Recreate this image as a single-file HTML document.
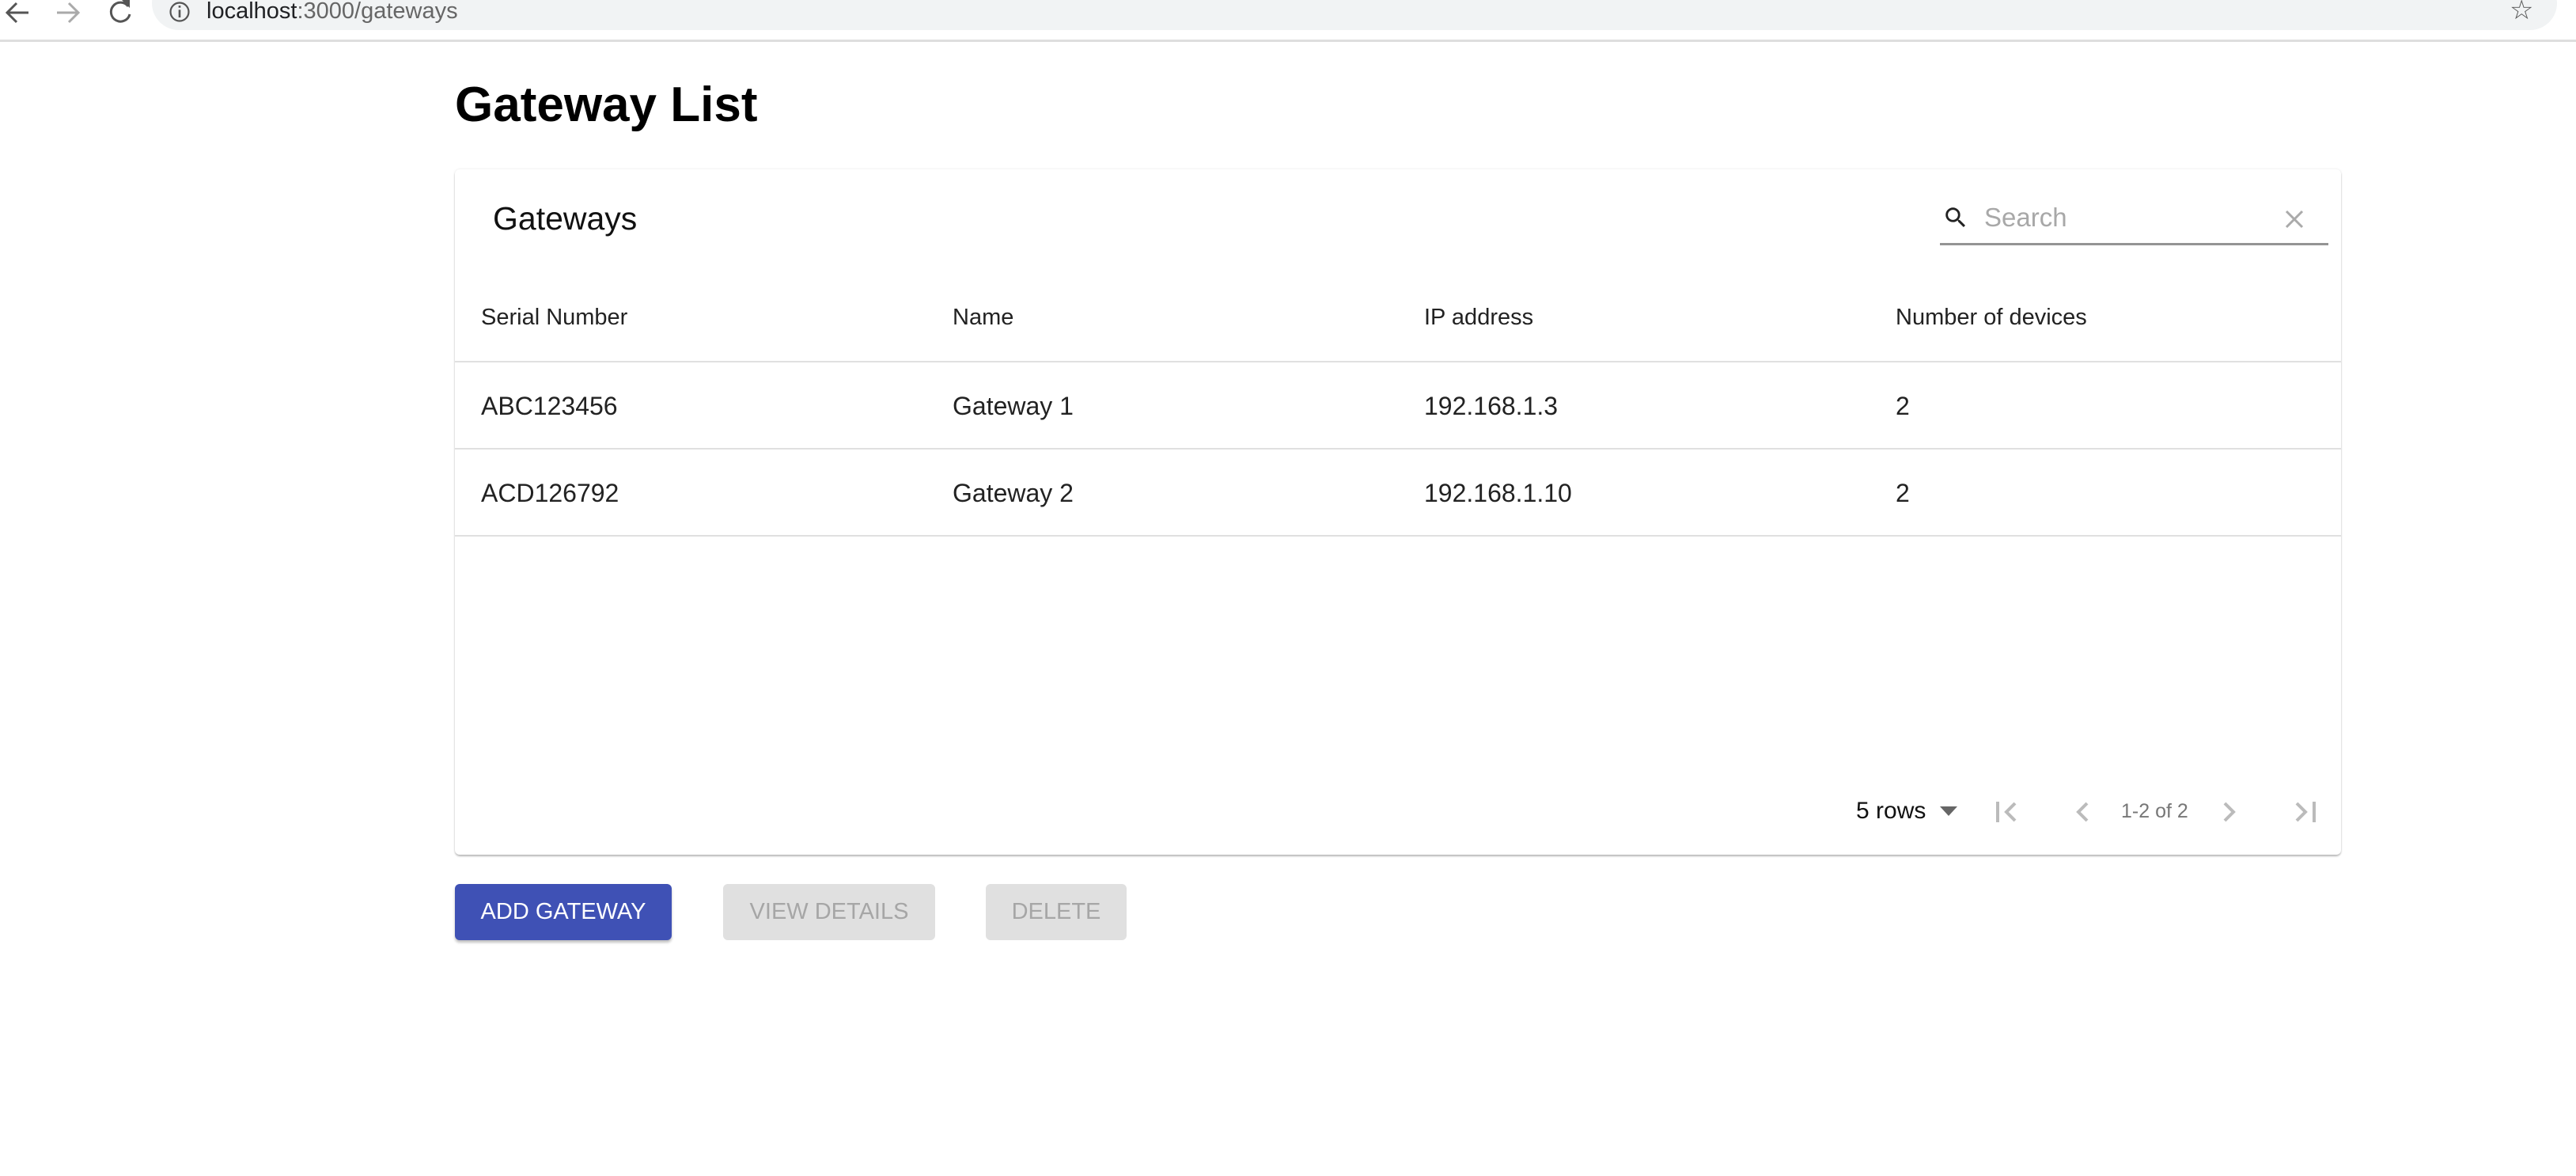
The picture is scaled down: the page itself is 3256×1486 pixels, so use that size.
<!DOCTYPE html>
<html><head><meta charset="utf-8"><style>
*{box-sizing:border-box;margin:0;padding:0}
body{width:3256px;height:1486px;background:#fff;font-family:"Liberation Sans",Arial,sans-serif;position:relative;overflow:hidden;color:#222}
.a{position:absolute}
.txt{position:absolute;white-space:nowrap;line-height:1}
</style></head><body>
<!-- browser bar -->
<div class="a" style="left:192px;top:-30px;width:3040px;height:68px;background:#f1f3f4;border-radius:34px"></div>
<div class="a" style="left:0;top:50px;width:3256px;height:3px;background:#dedede"></div>
<svg class="a" style="left:2px;top:-4px" width="170" height="44" viewBox="0 0 170 44">
<path d="M34 20H8M19 8 7 20l12 12" stroke="#555" stroke-width="3" fill="none"/>
<path d="M70 20h26M85 8l12 12-12 12" stroke="#aaa" stroke-width="3" fill="none"/>
<path d="M160 12a12 12 0 1 0 2 10" stroke="#555" stroke-width="3" fill="none"/><path d="M152 4h10v10z" fill="#555"/>
</svg>
<svg class="a" style="left:212px;top:0px" width="30" height="30" viewBox="0 0 34 34"><circle cx="17" cy="17" r="13" stroke="#555" stroke-width="2.5" fill="none"/><rect x="15.5" y="14" width="3" height="11" fill="#555"/><rect x="15.5" y="8" width="3" height="3" fill="#555"/></svg>
<div class="txt" style="left:261px;top:0px;font-size:29px;color:#202124">localhost<span style="color:#666">:3000/gateways</span></div>
<div class="txt" style="left:3172px;top:-4px;font-size:34px;color:#555">☆</div>

<div class="txt" style="left:575px;top:102px;font-size:62px;font-weight:bold;color:#000">Gateway List</div>

<!-- card -->
<div class="a" style="left:575px;top:214px;width:2384px;height:866px;background:#fff;border-radius:6px;box-shadow:0 2px 2px rgba(0,0,0,.18),0 3px 3px -2px rgba(0,0,0,.15),0 0 3px rgba(0,0,0,.1)">
</div>
<div class="txt" style="left:623px;top:256px;font-size:41px;color:#111">Gateways</div>
<svg class="a" style="left:2455px;top:258px" width="34" height="34" viewBox="0 0 24 24"><path d="M15.5 14h-.79l-.28-.27A6.47 6.47 0 0 0 16 9.5 6.5 6.5 0 1 0 9.5 16c1.61 0 3.09-.59 4.230-1.57l.27.28v.79l5 4.99L20.49 19l-4.99-5zm-6 0C7.01 14 5 11.99 5 9.5S7.01 5 9.5 5 14 7.01 14 9.5 11.990 14 9.5 14z" fill="#222"/></svg>
<div class="txt" style="left:2508px;top:258px;font-size:33px;color:#a8a8a8">Search</div>
<svg class="a" style="left:2886px;top:263px" width="28" height="28" viewBox="0 0 28 28"><path d="M4 4l20 20M24 4 4 24" stroke="#aaa" stroke-width="3"/></svg>
<div class="a" style="left:2452px;top:307px;width:491px;height:3px;background:#949494"></div>

<div class="txt" style="left:608px;top:387px;font-size:29px">Serial Number</div>
<div class="txt" style="left:1204px;top:387px;font-size:29px">Name</div>
<div class="txt" style="left:1800px;top:387px;font-size:29px">IP address</div>
<div class="txt" style="left:2396px;top:387px;font-size:29px">Number of devices</div>
<div class="a" style="left:575px;top:456px;width:2384px;height:2px;background:#e0e0e0"></div>
<div class="txt" style="left:608px;top:497px;font-size:32px">ABC123456</div>
<div class="txt" style="left:1204px;top:497px;font-size:32px">Gateway 1</div>
<div class="txt" style="left:1800px;top:497px;font-size:32px">192.168.1.3</div>
<div class="txt" style="left:2396px;top:497px;font-size:32px">2</div>
<div class="a" style="left:575px;top:566px;width:2384px;height:2px;background:#e0e0e0"></div>
<div class="txt" style="left:608px;top:607px;font-size:32px">ACD126792</div>
<div class="txt" style="left:1204px;top:607px;font-size:32px">Gateway 2</div>
<div class="txt" style="left:1800px;top:607px;font-size:32px">192.168.1.10</div>
<div class="txt" style="left:2396px;top:607px;font-size:32px">2</div>
<div class="a" style="left:575px;top:676px;width:2384px;height:2px;background:#e0e0e0"></div>

<!-- pagination -->
<div class="txt" style="left:2346px;top:1010px;font-size:30px;color:#111">5 rows</div>
<svg class="a" style="left:2452px;top:1019px" width="22" height="12" viewBox="0 0 22 12"><path d="M0 0h22L11 12z" fill="#666"/></svg>
<svg class="a" style="left:2522px;top:1011px" width="30" height="30" viewBox="0 0 30 30"><path d="M3 2v26" stroke="#bbb" stroke-width="4"/><path d="M25 4 14 15l11 11" stroke="#bbb" stroke-width="4" fill="none"/></svg>
<svg class="a" style="left:2622px;top:1011px" width="20" height="30" viewBox="0 0 20 30"><path d="M16 4 5 15l11 11" stroke="#bbb" stroke-width="4" fill="none"/></svg>
<div class="txt" style="left:2681px;top:1013px;font-size:25px;color:#777">1-2 of 2</div>
<svg class="a" style="left:2808px;top:1011px" width="20" height="30" viewBox="0 0 20 30"><path d="M4 4l11 11L4 26" stroke="#bbb" stroke-width="4" fill="none"/></svg>
<svg class="a" style="left:2898px;top:1011px" width="30" height="30" viewBox="0 0 30 30"><path d="M27 2v26" stroke="#bbb" stroke-width="4"/><path d="M5 4l11 11L5 26" stroke="#bbb" stroke-width="4" fill="none"/></svg>

<!-- buttons -->
<div class="a" style="left:575px;top:1117px;width:274px;height:71px;background:#3f51b5;border-radius:6px;box-shadow:0 3px 3px rgba(0,0,0,.25);color:#fff;font-size:29px;line-height:71px;text-align:center">ADD GATEWAY</div>
<div class="a" style="left:914px;top:1117px;width:268px;height:71px;background:#e0e0e0;border-radius:6px;color:#a6a6a6;font-size:29px;line-height:71px;text-align:center">VIEW DETAILS</div>
<div class="a" style="left:1246px;top:1117px;width:178px;height:71px;background:#e0e0e0;border-radius:6px;color:#a6a6a6;font-size:29px;line-height:71px;text-align:center">DELETE</div>
</body></html>
